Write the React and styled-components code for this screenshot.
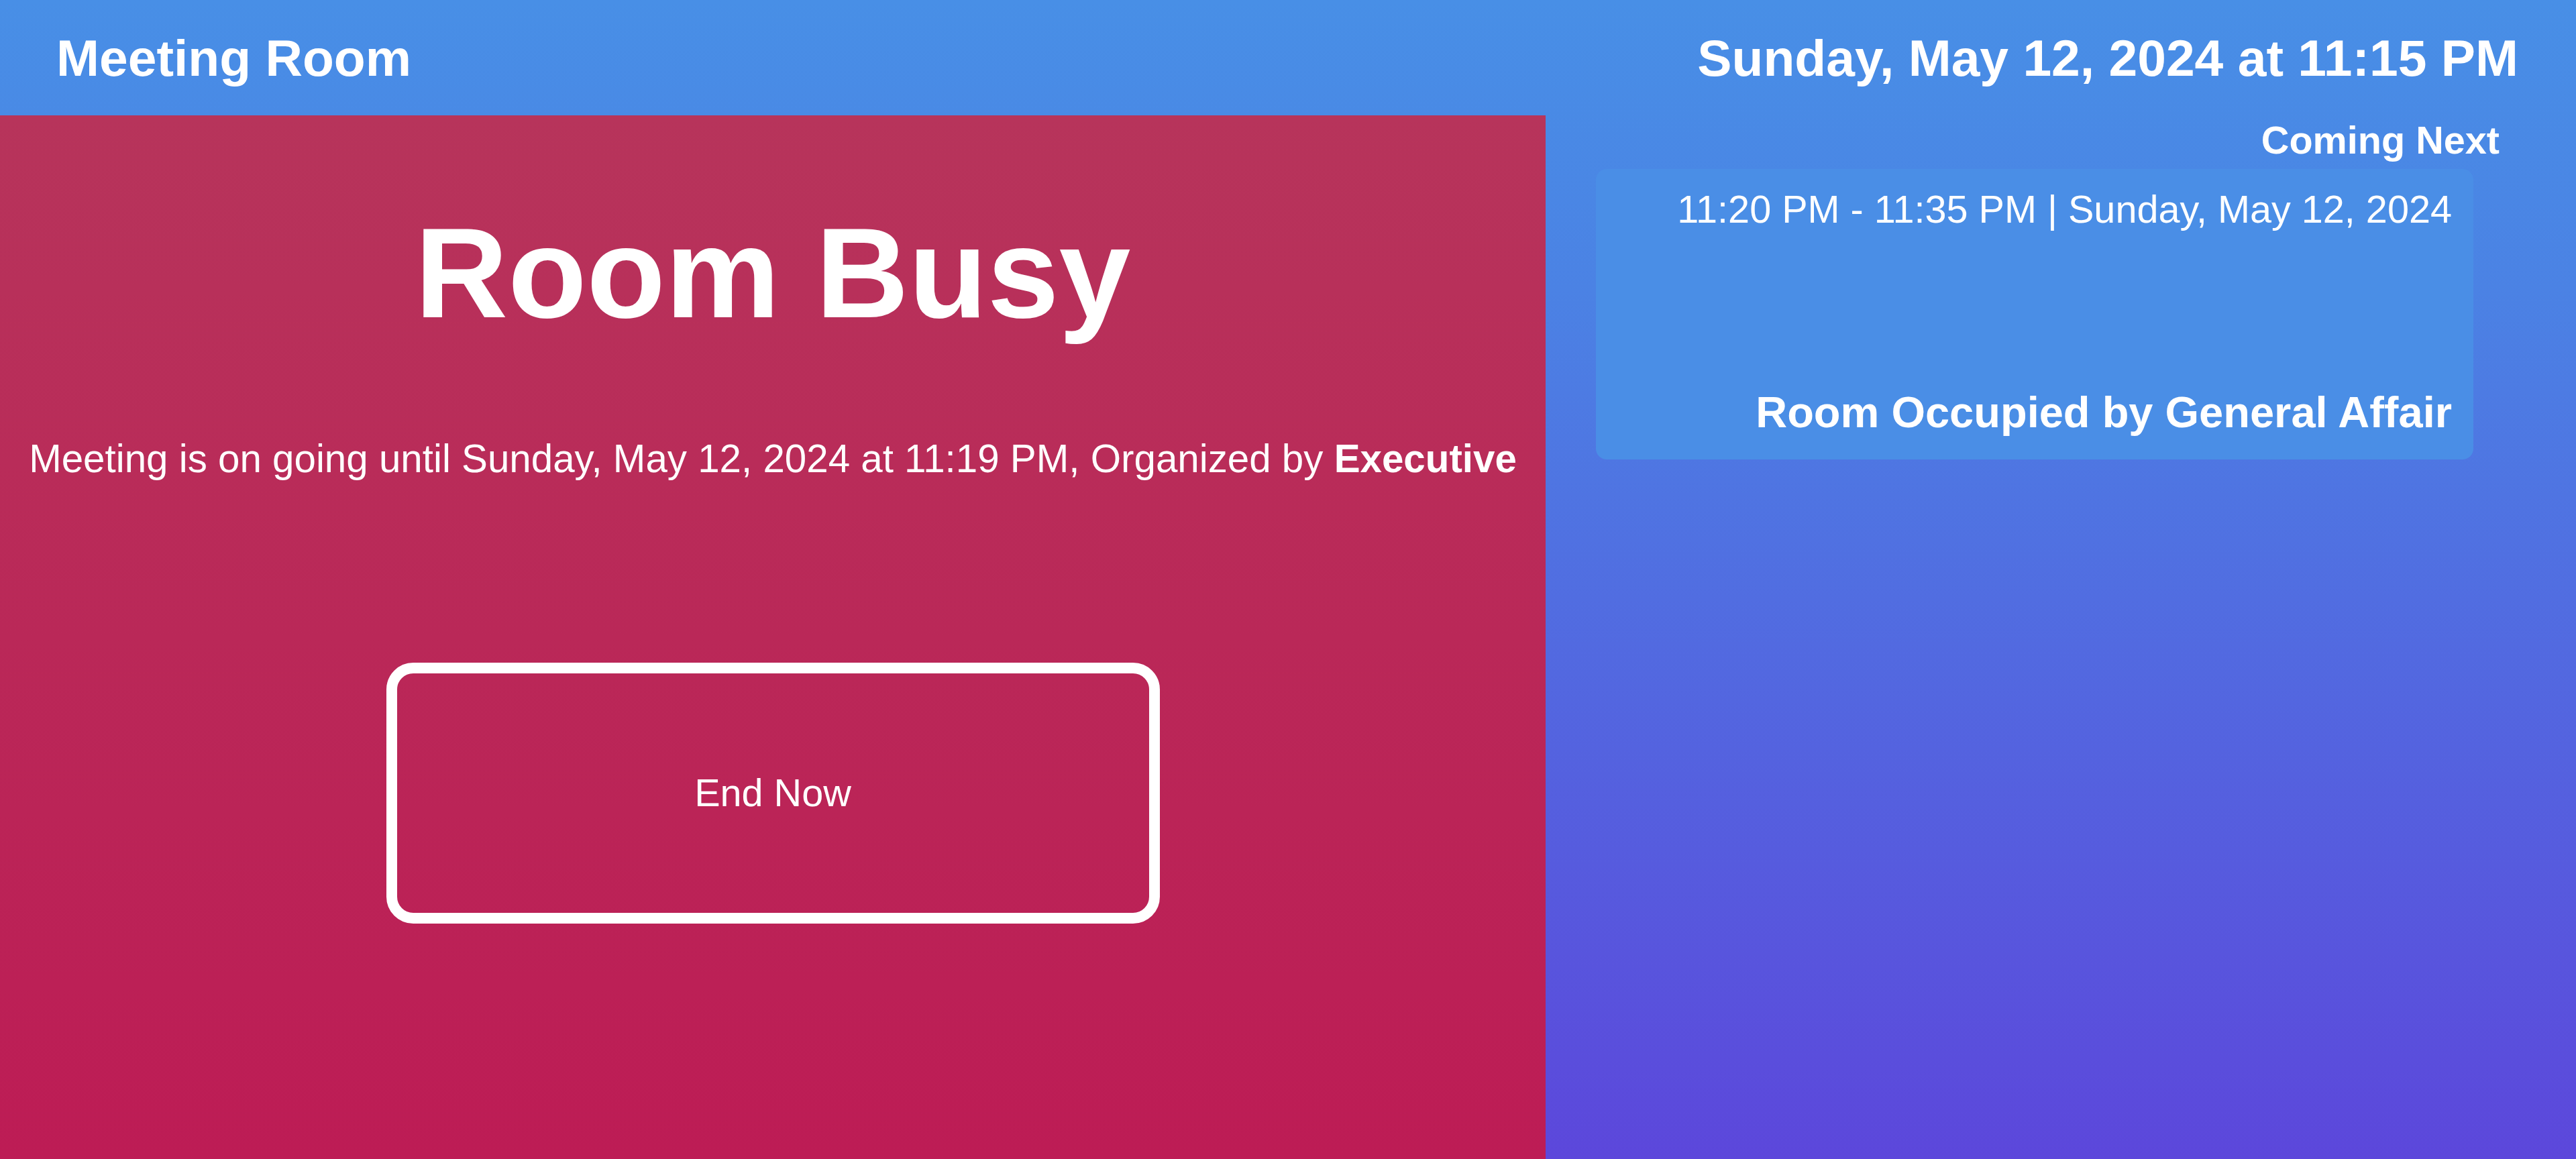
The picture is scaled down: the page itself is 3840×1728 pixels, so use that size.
import React from 'react';
import styled, { createGlobalStyle } from 'styled-components';

const GlobalStyle = createGlobalStyle`
  html, body {
    margin: 0;
    padding: 0;
  }
  body {
    font-family: "Liberation Sans", Arial, sans-serif;
    color: #ffffff;
    overflow: hidden;
  }
`;

const App = () => {
  return (
    <Page>
      <GlobalStyle />
      <Header>
        <HeaderTitle>Meeting Room</HeaderTitle>
        <HeaderTitle>Sunday, May 12, 2024 at 11:15 PM</HeaderTitle>
      </Header>
      <Main>
        <BusyPanel>
          <BusyTitle>Room Busy</BusyTitle>
          <BusyInfo>
            Meeting is on going until Sunday, May 12, 2024 at 11:19 PM, Organized by{' '}
            <strong>Executive</strong>
          </BusyInfo>
          <EndButton type="button">End Now</EndButton>
        </BusyPanel>
        <SidePanel>
          <ComingNext>Coming Next</ComingNext>
          <NextCard>
            <NextTime>11:20 PM - 11:35 PM | Sunday, May 12, 2024</NextTime>
            <NextOwner>Room Occupied by General Affair</NextOwner>
          </NextCard>
        </SidePanel>
      </Main>
    </Page>
  );
};

const Page = styled.div`
  width: 100%;
  height: 100vh;
  display: flex;
  flex-direction: column;
  background: linear-gradient(to bottom, #488fe6 0%, #4b82e4 25%, #5c47db 100%);
`;

const Header = styled.header`
  height: 172px;
  flex-shrink: 0;
  display: flex;
  align-items: center;
  justify-content: space-between;
  padding: 0 86px 0 84px;
`;

const HeaderTitle = styled.h2`
  margin: 0;
  font-size: 76.8px;
  line-height: 1.15;
  font-weight: bold;
`;

const Main = styled.main`
  flex: 1;
  display: flex;
  min-height: 0;
`;

const BusyPanel = styled.section`
  width: 60%;
  display: flex;
  flex-direction: column;
  align-items: center;
  text-align: center;
  background: linear-gradient(to bottom, #b7345b, #bd1c55);
`;

const BusyTitle = styled.h1`
  margin: 125px 0 0;
  font-size: 192px;
  line-height: 1.15;
  font-weight: bold;
`;

const BusyInfo = styled.p`
  margin: 132px 0 0;
  font-size: 58.3px;
  line-height: 1.15;
  white-space: nowrap;

  strong {
    font-weight: bold;
  }
`;

const EndButton = styled.button`
  margin-top: 271px;
  width: 1153px;
  height: 389px;
  border: 16px solid #ffffff;
  border-radius: 40px;
  background: transparent;
  color: #ffffff;
  font-family: "Liberation Sans", Arial, sans-serif;
  font-size: 57.6px;
  cursor: pointer;
`;

const SidePanel = styled.section`
  width: 40%;
  box-sizing: border-box;
  display: flex;
  flex-direction: column;
  padding: 4px 153px 0 75px;
`;

const ComingNext = styled.h3`
  margin: 0 -39px 0 0;
  text-align: right;
  font-size: 57.6px;
  line-height: 1.15;
  font-weight: bold;
`;

const NextCard = styled.div`
  margin-top: 10px;
  height: 433px;
  box-sizing: border-box;
  padding: 27px 32px 32px;
  border-radius: 16px;
  background: #4a8ee6;
  display: flex;
  flex-direction: column;
  justify-content: space-between;
  align-items: flex-end;
  text-align: right;
`;

const NextTime = styled.div`
  font-size: 57.6px;
  line-height: 1.15;
`;

const NextOwner = styled.div`
  font-size: 65px;
  line-height: 1.15;
  font-weight: bold;
`;

export default App;
